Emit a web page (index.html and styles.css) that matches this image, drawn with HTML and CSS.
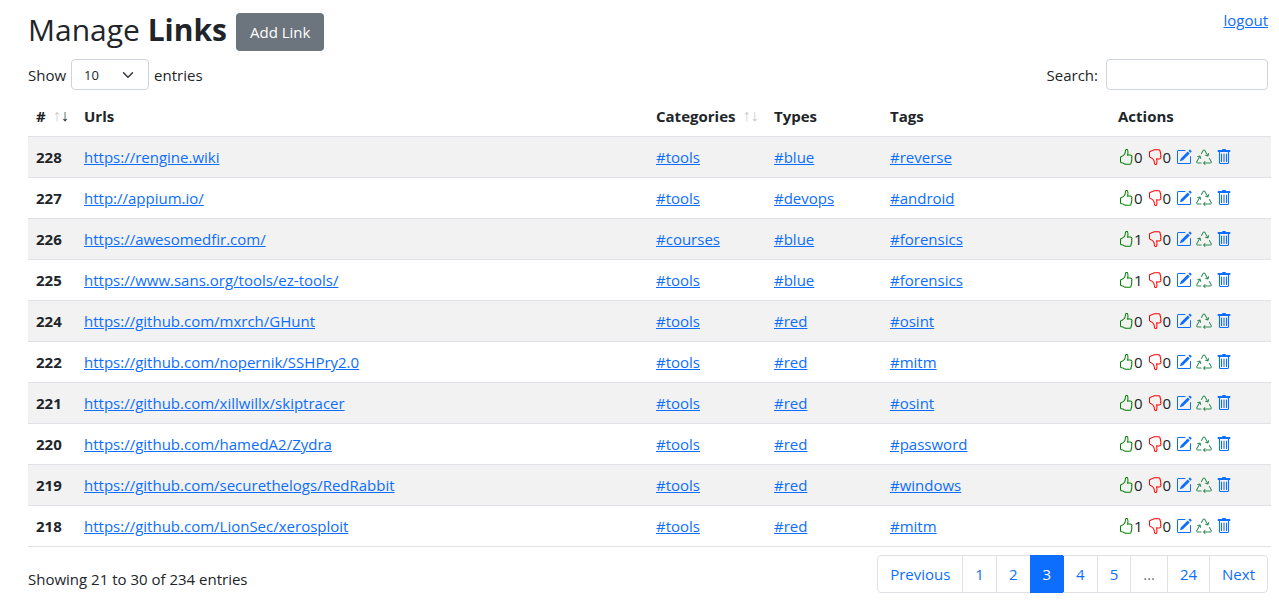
FILE: index.html
```
<!DOCTYPE html>
<html lang="en">
<head>
<meta charset="utf-8">
<title>Manage Links</title>
<link rel="stylesheet" href="styles.css">
</head>
<body>
<svg class="sprite" aria-hidden="true">
<symbol id="up" viewBox="0 0 16 16"><path d="M8.864.046C7.908-.193 7.02.53 6.956 1.466c-.072 1.051-.23 2.016-.428 2.59-.125.36-.479 1.013-1.04 1.639-.557.623-1.282 1.178-2.131 1.41C2.685 7.288 2 7.87 2 8.72v4.001c0 .845.682 1.464 1.448 1.545 1.07.114 1.564.415 2.068.723l.048.03c.272.165.578.348.97.484.397.136.861.217 1.466.217h3.5c.937 0 1.599-.477 1.934-1.064a1.86 1.86 0 0 0 .254-.912c0-.152-.023-.312-.077-.464.201-.263.38-.578.488-.901.11-.33.172-.762.004-1.149.069-.13.12-.269.159-.403.077-.27.113-.568.113-.857 0-.288-.036-.585-.113-.856a2.144 2.144 0 0 0-.138-.362 1.9 1.9 0 0 0 .234-1.734c-.206-.592-.682-1.1-1.2-1.272-.847-.282-1.803-.276-2.516-.211a9.84 9.84 0 0 0-.443.05 9.365 9.365 0 0 0-.062-4.509A1.38 1.38 0 0 0 9.125.111L8.864.046zM11.5 14.721H8c-.51 0-.863-.069-1.14-.164-.281-.097-.506-.228-.776-.393l-.04-.024c-.555-.339-1.198-.731-2.49-.868-.333-.036-.554-.29-.554-.55V8.72c0-.254.226-.543.62-.65 1.095-.3 1.977-.996 2.614-1.708.635-.71 1.064-1.475 1.238-1.978.243-.7.407-1.768.482-2.85.025-.362.36-.594.667-.518l.262.066c.16.04.258.143.288.255a8.34 8.34 0 0 1-.145 4.725.5.5 0 0 0 .595.644l.003-.001.014-.003.058-.014a8.908 8.908 0 0 1 1.036-.157c.663-.06 1.457-.054 2.11.164.175.058.45.3.57.65.107.308.087.67-.266 1.022l-.353.353.353.354c.043.043.105.141.154.315.048.167.075.37.075.581 0 .212-.027.414-.075.582-.05.174-.111.272-.154.315l-.353.353.353.354c.047.047.109.177.005.488a2.224 2.224 0 0 1-.505.805l-.353.353.353.354c.006.005.041.05.041.17a.866.866 0 0 1-.121.416c-.165.288-.503.56-1.066.56z"/></symbol>
<symbol id="down" viewBox="0 0 16 16"><path transform="matrix(1 0 0 -1 0 16)" d="M8.864.046C7.908-.193 7.02.53 6.956 1.466c-.072 1.051-.23 2.016-.428 2.59-.125.36-.479 1.013-1.04 1.639-.557.623-1.282 1.178-2.131 1.41C2.685 7.288 2 7.87 2 8.72v4.001c0 .845.682 1.464 1.448 1.545 1.07.114 1.564.415 2.068.723l.048.03c.272.165.578.348.97.484.397.136.861.217 1.466.217h3.5c.937 0 1.599-.477 1.934-1.064a1.86 1.86 0 0 0 .254-.912c0-.152-.023-.312-.077-.464.201-.263.38-.578.488-.901.11-.33.172-.762.004-1.149.069-.13.12-.269.159-.403.077-.27.113-.568.113-.857 0-.288-.036-.585-.113-.856a2.144 2.144 0 0 0-.138-.362 1.9 1.9 0 0 0 .234-1.734c-.206-.592-.682-1.1-1.2-1.272-.847-.282-1.803-.276-2.516-.211a9.84 9.84 0 0 0-.443.05 9.365 9.365 0 0 0-.062-4.509A1.38 1.38 0 0 0 9.125.111L8.864.046zM11.5 14.721H8c-.51 0-.863-.069-1.14-.164-.281-.097-.506-.228-.776-.393l-.04-.024c-.555-.339-1.198-.731-2.49-.868-.333-.036-.554-.29-.554-.55V8.72c0-.254.226-.543.62-.65 1.095-.3 1.977-.996 2.614-1.708.635-.71 1.064-1.475 1.238-1.978.243-.7.407-1.768.482-2.85.025-.362.36-.594.667-.518l.262.066c.16.04.258.143.288.255a8.34 8.34 0 0 1-.145 4.725.5.5 0 0 0 .595.644l.003-.001.014-.003.058-.014a8.908 8.908 0 0 1 1.036-.157c.663-.06 1.457-.054 2.11.164.175.058.45.3.57.65.107.308.087.67-.266 1.022l-.353.353.353.354c.043.043.105.141.154.315.048.167.075.37.075.581 0 .212-.027.414-.075.582-.05.174-.111.272-.154.315l-.353.353.353.354c.047.047.109.177.005.488a2.224 2.224 0 0 1-.505.805l-.353.353.353.354c.006.005.041.05.041.17a.866.866 0 0 1-.121.416c-.165.288-.503.56-1.066.56z"/></symbol>
<symbol id="edit" viewBox="0 0 16 16"><path d="M15.502 1.94a.5.5 0 0 1 0 .706L14.459 3.69l-2-2L13.502.646a.5.5 0 0 1 .707 0l1.293 1.293zm-1.75 2.456-2-2L4.939 9.21a.5.5 0 0 0-.121.196l-.805 2.414a.25.25 0 0 0 .316.316l2.414-.805a.5.5 0 0 0 .196-.12l6.813-6.814z"/><path d="M1 13.5A1.5 1.5 0 0 0 2.5 15h11a1.5 1.5 0 0 0 1.5-1.5v-6a.5.5 0 0 0-1 0v6a.5.5 0 0 1-.5.5h-11a.5.5 0 0 1-.5-.5v-11a.5.5 0 0 1 .5-.5H9a.5.5 0 0 0 0-1H2.5A1.5 1.5 0 0 0 1 2.5v11z"/></symbol>
<symbol id="recycle" viewBox="0 0 16 16"><path d="M9.302 1.256a1.5 1.5 0 0 0-2.604 0l-1.704 2.98a.5.5 0 0 0 .869.497l1.703-2.981a.5.5 0 0 1 .868 0l2.54 4.444-1.256-.337a.5.5 0 1 0-.26.966l2.415.647a.5.5 0 0 0 .613-.353l.647-2.415a.5.5 0 1 0-.966-.259l-.333 1.242-2.532-4.431zM2.973 7.773l-1.255.337a.5.5 0 1 1-.26-.966l2.416-.647a.5.5 0 0 1 .612.353l.647 2.415a.5.5 0 0 1-.966.259l-.333-1.242-2.545 4.454a.5.5 0 0 0 .434.748H5a.5.5 0 0 1 0 1H1.723A1.5 1.5 0 0 1 .421 12.24l2.552-4.467zm10.89 1.463a.5.5 0 1 0-.868.496l1.716 3.004a.5.5 0 0 1-.434.748h-5.57l.647-.646a.5.5 0 1 0-.708-.707l-1.5 1.5a.498.498 0 0 0 0 .707l1.5 1.5a.5.5 0 1 0 .708-.707l-.647-.647h5.57a1.5 1.5 0 0 0 1.302-2.244l-1.716-3.004z"/></symbol>
<symbol id="trash" viewBox="0 0 16 16"><path d="M6 1a1 1 0 0 1 1-1h2a1 1 0 0 1 1 1h3.500a1 1 0 0 1 0 2H2.500a1 1 0 0 1 0-2z"/><path d="M3.500 3v10.500a1 1 0 0 0 1 1h7a1 1 0 0 0 1-1V3M5.500 5v7.500M8 5v7.500M10.500 5v7.500" fill="none" stroke="currentColor" stroke-width="1.100" stroke-linecap="round"/></symbol>
</svg>
<main class="page">
<header class="topbar">
<div class="heading"><h1 class="title">Manage <b>Links</b></h1><button class="btn-add" type="button">Add Link</button></div>
<a class="logout" href="#">logout</a>
</header>
<div class="controls">
<label class="length">Show <select class="length-select"><option>10</option><option>25</option><option>50</option></select> entries</label>
<label class="filter">Search: <input class="filter-input" type="search"></label>
</div>
<table class="links">
<colgroup><col class="col-id"><col class="col-url"><col class="col-cat"><col class="col-type"><col class="col-tag"><col class="col-act"></colgroup>
<thead><tr>
<th><span class="sortable"># <span class="sort"><i>↑</i><i class="on">↓</i></span></span></th><th>Urls</th><th><span class="sortable">Categories <span class="sort"><i>↑</i><i>↓</i></span></span></th><th>Types</th><th>Tags</th><th>Actions</th>
</tr></thead>
<tbody>
<tr><th>228</th><td><a href="#">https://rengine.wiki</a></td><td><a href="#">#tools</a></td><td><a href="#">#blue</a></td><td><a href="#">#reverse</a></td><td><div class="actions"><span class="vote"><a class="icon up" href="#" aria-label="Like"><svg><use href="#up"/></svg></a>0</span><span class="vote"><a class="icon down" href="#" aria-label="Dislike"><svg><use href="#down"/></svg></a>0</span><a class="icon" href="#" aria-label="Edit"><svg><use href="#edit"/></svg></a><a class="icon recycle" href="#" aria-label="Recycle"><svg><use href="#recycle"/></svg></a><a class="icon" href="#" aria-label="Delete"><svg><use href="#trash"/></svg></a></div></td></tr>
<tr><th>227</th><td><a href="#">http://appium.io/</a></td><td><a href="#">#tools</a></td><td><a href="#">#devops</a></td><td><a href="#">#android</a></td><td><div class="actions"><span class="vote"><a class="icon up" href="#" aria-label="Like"><svg><use href="#up"/></svg></a>0</span><span class="vote"><a class="icon down" href="#" aria-label="Dislike"><svg><use href="#down"/></svg></a>0</span><a class="icon" href="#" aria-label="Edit"><svg><use href="#edit"/></svg></a><a class="icon recycle" href="#" aria-label="Recycle"><svg><use href="#recycle"/></svg></a><a class="icon" href="#" aria-label="Delete"><svg><use href="#trash"/></svg></a></div></td></tr>
<tr><th>226</th><td><a href="#">https://awesomedfir.com/</a></td><td><a href="#">#courses</a></td><td><a href="#">#blue</a></td><td><a href="#">#forensics</a></td><td><div class="actions"><span class="vote"><a class="icon up" href="#" aria-label="Like"><svg><use href="#up"/></svg></a>1</span><span class="vote"><a class="icon down" href="#" aria-label="Dislike"><svg><use href="#down"/></svg></a>0</span><a class="icon" href="#" aria-label="Edit"><svg><use href="#edit"/></svg></a><a class="icon recycle" href="#" aria-label="Recycle"><svg><use href="#recycle"/></svg></a><a class="icon" href="#" aria-label="Delete"><svg><use href="#trash"/></svg></a></div></td></tr>
<tr><th>225</th><td><a href="#">https://www.sans.org/tools/ez-tools/</a></td><td><a href="#">#tools</a></td><td><a href="#">#blue</a></td><td><a href="#">#forensics</a></td><td><div class="actions"><span class="vote"><a class="icon up" href="#" aria-label="Like"><svg><use href="#up"/></svg></a>1</span><span class="vote"><a class="icon down" href="#" aria-label="Dislike"><svg><use href="#down"/></svg></a>0</span><a class="icon" href="#" aria-label="Edit"><svg><use href="#edit"/></svg></a><a class="icon recycle" href="#" aria-label="Recycle"><svg><use href="#recycle"/></svg></a><a class="icon" href="#" aria-label="Delete"><svg><use href="#trash"/></svg></a></div></td></tr>
<tr><th>224</th><td><a href="#">https://github.com/mxrch/GHunt</a></td><td><a href="#">#tools</a></td><td><a href="#">#red</a></td><td><a href="#">#osint</a></td><td><div class="actions"><span class="vote"><a class="icon up" href="#" aria-label="Like"><svg><use href="#up"/></svg></a>0</span><span class="vote"><a class="icon down" href="#" aria-label="Dislike"><svg><use href="#down"/></svg></a>0</span><a class="icon" href="#" aria-label="Edit"><svg><use href="#edit"/></svg></a><a class="icon recycle" href="#" aria-label="Recycle"><svg><use href="#recycle"/></svg></a><a class="icon" href="#" aria-label="Delete"><svg><use href="#trash"/></svg></a></div></td></tr>
<tr><th>222</th><td><a href="#">https://github.com/nopernik/SSHPry2.0</a></td><td><a href="#">#tools</a></td><td><a href="#">#red</a></td><td><a href="#">#mitm</a></td><td><div class="actions"><span class="vote"><a class="icon up" href="#" aria-label="Like"><svg><use href="#up"/></svg></a>0</span><span class="vote"><a class="icon down" href="#" aria-label="Dislike"><svg><use href="#down"/></svg></a>0</span><a class="icon" href="#" aria-label="Edit"><svg><use href="#edit"/></svg></a><a class="icon recycle" href="#" aria-label="Recycle"><svg><use href="#recycle"/></svg></a><a class="icon" href="#" aria-label="Delete"><svg><use href="#trash"/></svg></a></div></td></tr>
<tr><th>221</th><td><a href="#">https://github.com/xillwillx/skiptracer</a></td><td><a href="#">#tools</a></td><td><a href="#">#red</a></td><td><a href="#">#osint</a></td><td><div class="actions"><span class="vote"><a class="icon up" href="#" aria-label="Like"><svg><use href="#up"/></svg></a>0</span><span class="vote"><a class="icon down" href="#" aria-label="Dislike"><svg><use href="#down"/></svg></a>0</span><a class="icon" href="#" aria-label="Edit"><svg><use href="#edit"/></svg></a><a class="icon recycle" href="#" aria-label="Recycle"><svg><use href="#recycle"/></svg></a><a class="icon" href="#" aria-label="Delete"><svg><use href="#trash"/></svg></a></div></td></tr>
<tr><th>220</th><td><a href="#">https://github.com/hamedA2/Zydra</a></td><td><a href="#">#tools</a></td><td><a href="#">#red</a></td><td><a href="#">#password</a></td><td><div class="actions"><span class="vote"><a class="icon up" href="#" aria-label="Like"><svg><use href="#up"/></svg></a>0</span><span class="vote"><a class="icon down" href="#" aria-label="Dislike"><svg><use href="#down"/></svg></a>0</span><a class="icon" href="#" aria-label="Edit"><svg><use href="#edit"/></svg></a><a class="icon recycle" href="#" aria-label="Recycle"><svg><use href="#recycle"/></svg></a><a class="icon" href="#" aria-label="Delete"><svg><use href="#trash"/></svg></a></div></td></tr>
<tr><th>219</th><td><a href="#">https://github.com/securethelogs/RedRabbit</a></td><td><a href="#">#tools</a></td><td><a href="#">#red</a></td><td><a href="#">#windows</a></td><td><div class="actions"><span class="vote"><a class="icon up" href="#" aria-label="Like"><svg><use href="#up"/></svg></a>0</span><span class="vote"><a class="icon down" href="#" aria-label="Dislike"><svg><use href="#down"/></svg></a>0</span><a class="icon" href="#" aria-label="Edit"><svg><use href="#edit"/></svg></a><a class="icon recycle" href="#" aria-label="Recycle"><svg><use href="#recycle"/></svg></a><a class="icon" href="#" aria-label="Delete"><svg><use href="#trash"/></svg></a></div></td></tr>
<tr><th>218</th><td><a href="#">https://github.com/LionSec/xerosploit</a></td><td><a href="#">#tools</a></td><td><a href="#">#red</a></td><td><a href="#">#mitm</a></td><td><div class="actions"><span class="vote"><a class="icon up" href="#" aria-label="Like"><svg><use href="#up"/></svg></a>1</span><span class="vote"><a class="icon down" href="#" aria-label="Dislike"><svg><use href="#down"/></svg></a>0</span><a class="icon" href="#" aria-label="Edit"><svg><use href="#edit"/></svg></a><a class="icon recycle" href="#" aria-label="Recycle"><svg><use href="#recycle"/></svg></a><a class="icon" href="#" aria-label="Delete"><svg><use href="#trash"/></svg></a></div></td></tr>
</tbody>
</table>
<footer class="footer">
<div class="info">Showing 21 to 30 of 234 entries</div>
<nav class="pager" aria-label="Pages"><a href="#">Previous</a><a href="#">1</a><a href="#">2</a><a class="active" href="#" aria-current="page">3</a><a href="#">4</a><a href="#">5</a><span>…</span><a href="#">24</a><a href="#">Next</a></nav>
</footer>
</main>
</body>
</html>
```
FILE: styles.css
```
*, *::before, *::after { box-sizing: border-box; }
body {
  margin: 0;
  font: 15px/24px "Segoe UI", "Open Sans", "Noto Sans", sans-serif;
  color: #212529;
  background: #fff;
}
a { color: #0d6efd; }
.sprite { display: none; }
.page { padding: 8px 11px 8px 28px; }
.topbar { display: flex; justify-content: space-between; align-items: flex-start; }
.heading { display: flex; align-items: flex-end; gap: 9px; }
.title { margin: 0; font-size: 30px; line-height: 43px; font-weight: 400; }
.title b { font-weight: 700; }
.btn-add {
  height: 38px;
  padding: 0 14px;
  border: 0;
  border-radius: 4px;
  background: #6c757d;
  color: #fff;
  font: inherit;
}
.controls { display: flex; justify-content: space-between; margin-top: 8px; }
.length, .filter { display: flex; align-items: center; gap: 5px; }
.filter { gap: 8px; }
.length-select {
  width: 78px;
  height: 31px;
  padding: 0 12px;
  border: 1px solid #ced4da;
  border-radius: 4px;
  appearance: none;
  background: #fff url("data:image/svg+xml,%3Csvg xmlns='http://www.w3.org/2000/svg' viewBox='0 0 16 16'%3E%3Cpath fill='none' stroke='%23343a40' stroke-linecap='round' stroke-linejoin='round' stroke-width='2' d='M2 5l6 6 6-6'/%3E%3C/svg%3E") no-repeat right 14px center / 12px 12px;
  color: inherit;
  font: inherit;
  font-size: 13px;
}
.filter-input {
  width: 162px;
  height: 31px;
  padding: 0 8px;
  border: 1px solid #ced4da;
  border-radius: 4px;
  background: #fff;
  font: inherit;
}
.links {
  width: calc(100% + 3px);
  margin-top: 6px;
  table-layout: fixed;
  border-collapse: separate;
  border-spacing: 0;
}
.col-id { width: 48px; }
.col-cat { width: 118px; }
.col-type { width: 116px; }
.col-tag { width: 228px; }
.col-act { width: 161px; }
.links th, .links td {
  height: 41px;
  padding: 8px;
  border-bottom: 1px solid #dee2e6;
  text-align: left;
  vertical-align: middle;
  white-space: nowrap;
}
.links th { padding-right: 0; }
.links tbody tr:nth-child(odd) { background: #f2f2f2; }
.sortable { display: flex; gap: 7px; }
.sort { display: flex; font-family: "Liberation Sans", sans-serif; font-size: 16px; font-weight: 400; }
.sort i { font-style: normal; color: #c8c9ca; }
.sort .on { color: #212529; }
.actions { display: flex; align-items: center; gap: 4px; }
.vote { display: flex; align-items: center; }
.vote + .icon { margin-left: 1px; }
.icon { display: flex; }
.icon svg { width: 16px; height: 16px; fill: currentColor; }
.up { color: #008000; }
.down { color: #f00; }
.recycle { color: #2e8b57; }
.footer { display: flex; justify-content: space-between; align-items: flex-start; margin-top: 8px; }
.info { padding-top: 12px; }
.pager { display: flex; border: 1px solid #dee2e6; border-radius: 4px; }
.pager > * {
  height: 36px;
  padding: 6px 12px;
  text-decoration: none;
}
.pager > * + * { border-left: 1px solid #dee2e6; }
.pager span { color: #6c757d; }
.pager .active { height: 38px; margin: -1px 0; padding: 7px 12px; border-color: #0d6efd; background: #0d6efd; color: #fff; }
.pager .active + * { border-color: #0d6efd; }
```
